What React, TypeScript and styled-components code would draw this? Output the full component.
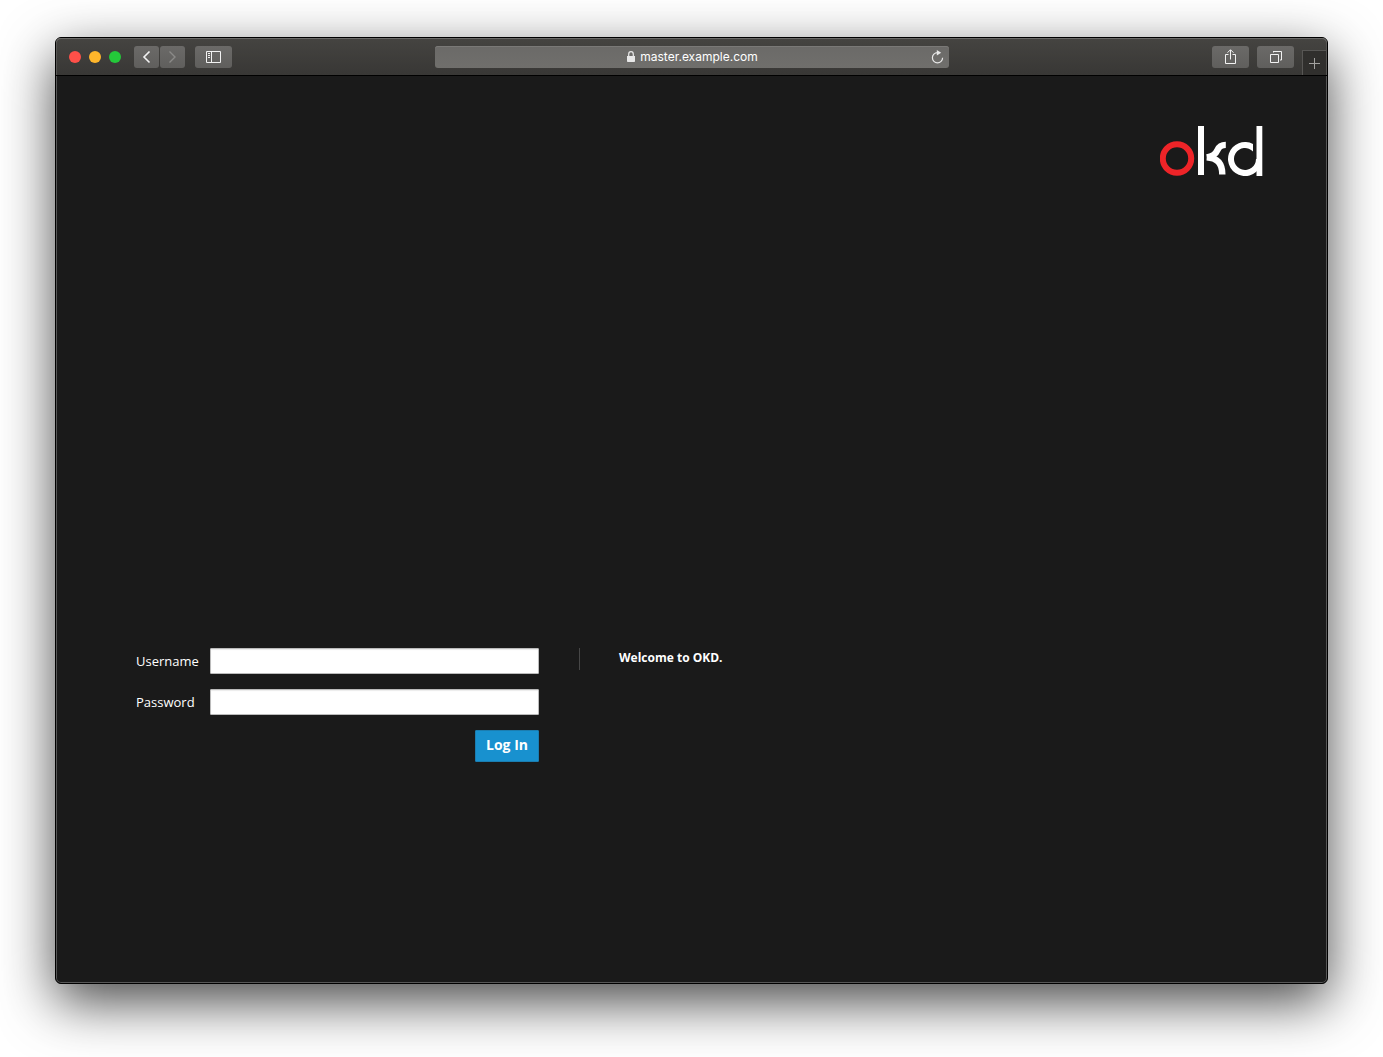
import React from "react";
import styled, { createGlobalStyle } from "styled-components";

const GlobalStyle = createGlobalStyle`
  *, *::before, *::after { box-sizing: border-box; }
  body { margin: 0; background: #fff; }
`;

const Desktop = styled.div`
  display: flex;
  min-height: 100vh;
  padding: 37px 55px 73px;
  overflow: hidden;
`;

const BrowserWindow = styled.div`
  display: flex;
  flex: 1;
  flex-direction: column;
  min-width: 0;
  border: 1px solid #000;
  border-radius: 6px;
  background: #1a1a1a;
  box-shadow: inset 0 0 0 1px #575757, 0 18px 54px rgba(0, 0, 0, 0.72);
`;

const Toolbar = styled.header`
  display: grid;
  grid-template-columns: 1fr minmax(0, 514px) 1fr;
  align-items: center;
  height: 38px;
  border-bottom: 1px solid #000;
  border-radius: 5px 5px 0 0;
  background: linear-gradient(#454441, #383735);
  box-shadow: inset 0 1px 0 #6b6a68, inset 1px 0 0 #575654, inset -1px 0 0 #575654;
`;

const ToolGroup = styled.div`
  display: flex;
  align-items: center;
  padding-left: 13px;
  gap: 10px;
`;

const Lights = styled.div`
  display: flex;
  gap: 8px;
  margin-right: 3px;
`;

const Light = styled.button<{ $color: string }>`
  width: 12px;
  height: 12px;
  padding: 0;
  border: 0;
  border-radius: 50%;
  background: ${(p) => p.$color};
`;

const NavPair = styled.nav`
  display: flex;
  gap: 1px;
`;

const ToolButton = styled.button<{ $narrow?: boolean; $dim?: boolean }>`
  display: flex;
  align-items: center;
  justify-content: center;
  width: ${(p) => (p.$narrow ? 25 : 37)}px;
  height: 22px;
  padding: 0;
  border: 0;
  border-radius: 3px;
  color: ${(p) => (p.$dim ? "#8b8a88" : "#f2f2f2")};
  background: linear-gradient(#6b6a68, #605f5d);
`;

const AddressBar = styled.div`
  display: flex;
  align-items: center;
  height: 22px;
  padding-right: 5px;
  border-radius: 3px;
  background: linear-gradient(#6b6a68, #706f6c);
  box-shadow: inset 0 1px 0 #7a7977;
`;

const Address = styled.div`
  display: flex;
  flex: 1;
  align-items: center;
  justify-content: center;
  gap: 5px;
  padding-left: 20px;
  color: #fff;
  font: 400 12px/16px Inter, "Liberation Sans", sans-serif;
`;

const ReloadButton = styled.button`
  display: flex;
  padding: 0;
  border: 0;
  color: #e8e8e8;
  background: none;
`;

const RightTools = styled.div`
  display: flex;
  align-items: center;
  align-self: stretch;
  justify-content: flex-end;
  gap: 8px;
`;

const NewTab = styled.button`
  display: flex;
  align-items: center;
  align-self: flex-end;
  justify-content: center;
  width: 25px;
  height: 25px;
  padding: 0;
  border: solid #575654;
  border-width: 1px;
  border-bottom: 0;
  color: #a3a2a0;
  background: #302f2d;
`;

const Page = styled.main`
  display: flex;
  flex: 1;
  flex-direction: column;
  justify-content: space-between;
  padding: 50px 64px 221px 80px;
  color: #fff;
  font: 13px/22px "Open Sans", sans-serif;
`;

const Brand = styled.div`
  display: flex;
  justify-content: flex-end;
`;

const LoginRow = styled.div`
  display: flex;
  align-items: flex-start;
  gap: 40px;
`;

const LoginForm = styled.form`
  display: grid;
  grid-template-columns: 74px minmax(0, 329px);
  align-items: center;
  row-gap: 15px;
`;

const Label = styled.label`
  font-weight: 500;
`;

const Field = styled.input`
  width: 100%;
  height: 26px;
  padding: 2px 6px;
  border: 1px solid #bbb;
  border-radius: 1px;
  color: #333;
  background: #fff;
  box-shadow: inset 0 1px 1px rgba(0, 0, 0, 0.08);
  font: inherit;
`;

const LoginButton = styled.button`
  grid-column: 2;
  justify-self: end;
  height: 32px;
  padding: 0 10px 2px;
  border: 1px solid #1b7db0;
  border-radius: 1px;
  color: #fff;
  background: #1891cf;
  font: 700 14px/22px "Open Sans", sans-serif;
`;

const Welcome = styled.p`
  margin: 0;
  padding: 0 0 2px 39px;
  border-left: 1px solid #474747;
  font-size: 12px;
  line-height: 20px;
  font-weight: 700;
`;

const Back = () => (
  <svg width="9" height="14" viewBox="0 0 9 14" fill="none" stroke="currentColor" strokeWidth="1.6" aria-hidden="true">
    <path d="M7.5 1.5 2 7l5.500 5.500" />
  </svg>
);

const Forward = () => (
  <svg width="9" height="14" viewBox="0 0 9 14" fill="none" stroke="currentColor" strokeWidth="1.4" aria-hidden="true">
    <path d="M1.500 1.500 7 7l-5.500 5.500" />
  </svg>
);

const Sidebar = () => (
  <svg width="15" height="12" viewBox="0 0 15 12" fill="none" stroke="currentColor" aria-hidden="true">
    <path d="M.5.500h14v11H.500zM5.500.500v11M2 2.500h2M2 4.500h2M2 6.500h2" />
  </svg>
);

const Lock = () => (
  <svg width="8" height="11" viewBox="0 0 8 11" aria-hidden="true">
    <path d="M0 5h8v5.200a.8.8 0 0 1-.8.8H.8a.8.8 0 0 1-.8-.8z" fill="#e8e8e8" />
    <path d="M1.700 5.500V3.200a2.300 2.500 0 0 1 4.600 0v2.300" fill="none" stroke="#e8e8e8" strokeWidth="1.200" />
  </svg>
);

const Reload = () => (
  <svg width="13" height="14" viewBox="0 0 13 14" fill="none" aria-hidden="true">
    <path d="M6.500 2.700A5.100 5.100 0 1 0 11.600 7.800" stroke="currentColor" strokeWidth="1.200" />
    <path d="M5.800 0 10.200 2.800 5.800 5.600z" fill="currentColor" />
  </svg>
);

const Share = () => (
  <svg width="11" height="16" viewBox="0 0 11 16" fill="none" stroke="currentColor" aria-hidden="true">
    <path d="M3.500 5.500H.5v9h10v-9h-3M5.500 10.500V1M2.500 3.700l3-3 3 3" />
  </svg>
);

const Tabs = () => (
  <svg width="12" height="12" viewBox="0 0 12 12" fill="none" stroke="currentColor" aria-hidden="true">
    <path d="M.5 3.500h8v8h-8zM3 .5h8.500V9H10M3.500.500v1" />
  </svg>
);

const Plus = () => (
  <svg width="11" height="11" viewBox="0 0 11 11" stroke="currentColor" aria-hidden="true">
    <path d="M5.500 0v11M0 5.500h11" />
  </svg>
);

const OkdLogo = () => (
  <svg width="103" height="51" viewBox="0 0 103 51" fill="none" role="img" aria-label="okd">
    <circle cx="17" cy="32.500" r="14.200" stroke="#ee2428" strokeWidth="6" />
    <path d="M38 0h6v49h-6z" fill="#fff" />
    <path
      d="M46.700 31.300C53 30.500 56 27.500 57.500 24 59 20.500 61 18.900 65.800 18.900M46.700 31.300C57 32 62.300 37 62.300 48.500"
      stroke="#fff"
      strokeWidth="6.400"
    />
    <path d="M93 18A17 17 0 1 0 102 33H96A11 11 0 1 1 93 25.400z" fill="#fff" />
    <path d="M96.500 0h5.800v50h-5.800z" fill="#fff" />
  </svg>
);

export default function App() {
  return (
    <>
      <GlobalStyle />
      <Desktop>
        <BrowserWindow>
          <Toolbar>
            <ToolGroup>
              <Lights>
                <Light $color="#ff5049" aria-label="Close" />
                <Light $color="#ffb62b" aria-label="Minimize" />
                <Light $color="#24c83a" aria-label="Zoom" />
              </Lights>
              <NavPair>
                <ToolButton $narrow aria-label="Back"><Back /></ToolButton>
                <ToolButton $narrow $dim aria-label="Forward"><Forward /></ToolButton>
              </NavPair>
              <ToolButton aria-label="Sidebar"><Sidebar /></ToolButton>
            </ToolGroup>
            <AddressBar>
              <Address><Lock />master.example.com</Address>
              <ReloadButton aria-label="Reload"><Reload /></ReloadButton>
            </AddressBar>
            <RightTools>
              <ToolButton aria-label="Share"><Share /></ToolButton>
              <ToolButton aria-label="Show tabs"><Tabs /></ToolButton>
              <NewTab aria-label="New tab"><Plus /></NewTab>
            </RightTools>
          </Toolbar>
          <Page>
            <Brand><OkdLogo /></Brand>
            <LoginRow>
              <LoginForm onSubmit={(e: React.FormEvent) => e.preventDefault()}>
                <Label htmlFor="username">Username</Label>
                <Field id="username" type="text" autoComplete="username" />
                <Label htmlFor="password">Password</Label>
                <Field id="password" type="password" autoComplete="current-password" />
                <LoginButton type="submit">Log In</LoginButton>
              </LoginForm>
              <Welcome>Welcome to OKD.</Welcome>
            </LoginRow>
          </Page>
        </BrowserWindow>
      </Desktop>
    </>
  );
}
